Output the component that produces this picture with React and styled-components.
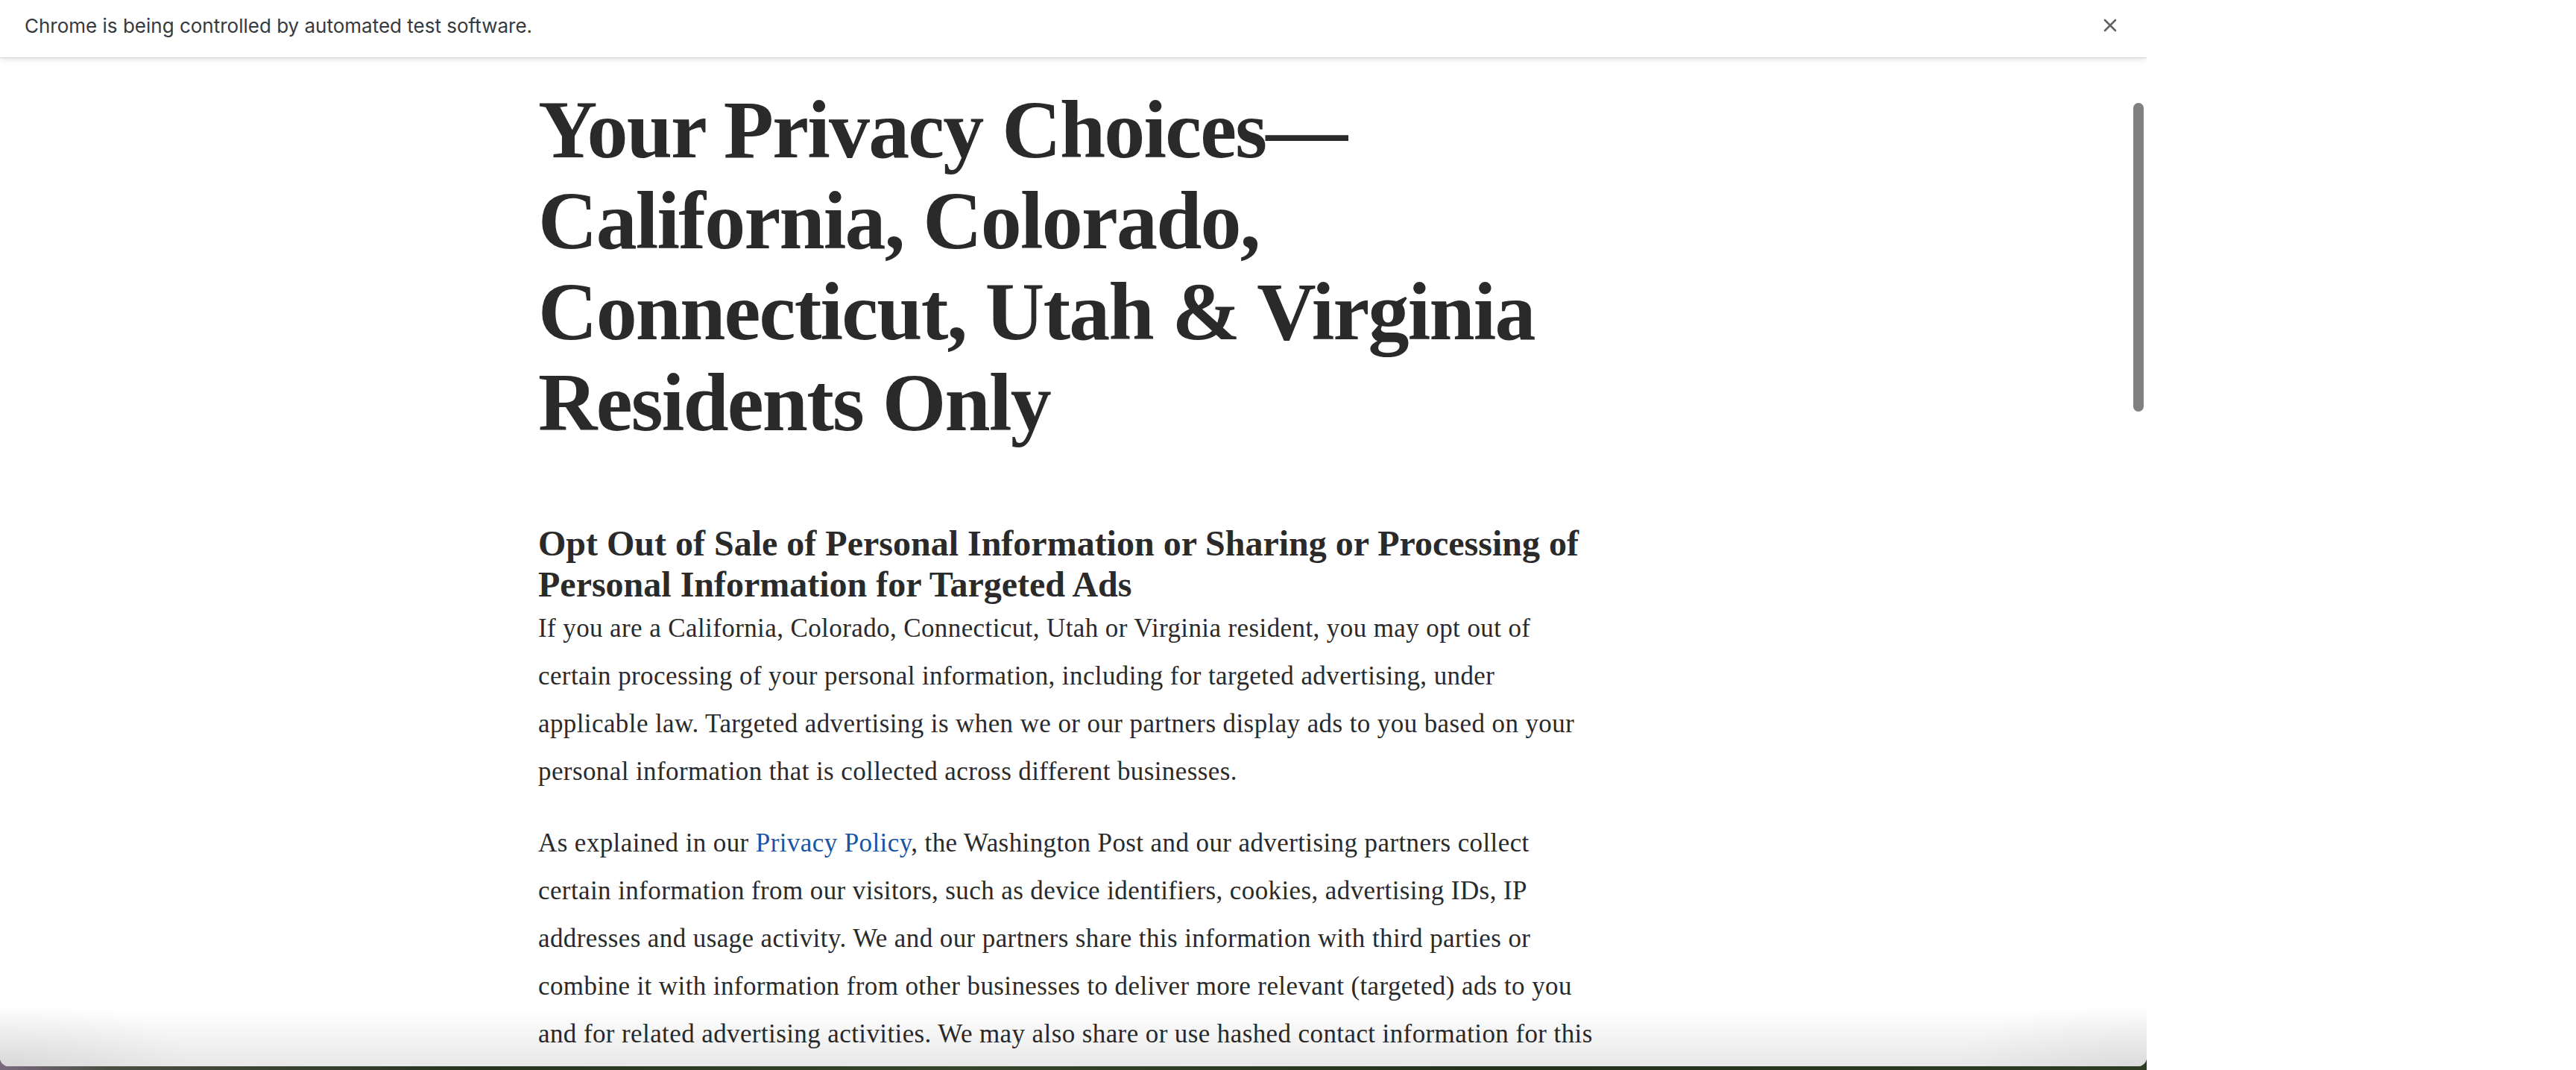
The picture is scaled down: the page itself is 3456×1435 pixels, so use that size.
import React from "react";
import styled, { createGlobalStyle } from "styled-components";

const GlobalStyle = createGlobalStyle`
  html, body {
    margin: 0;
    padding: 0;
    background: #ffffff;
    overflow: hidden;
  }
  #root {
    width: 3456px;
    height: 1435px;
  }
`;

const Screen = styled.div`
  width: 3456px;
  height: 1435px;
  display: flex;
  background: #ffffff;
`;

const WindowColumn = styled.div`
  flex: none;
  width: 2880px;
  height: 100%;
  display: flex;
  flex-direction: column;
  background: linear-gradient(
    90deg,
    #7a6a80 0%,
    #4a4f42 5%,
    #26341f 22%,
    #34452a 45%,
    #22301b 70%,
    #2d3d24 100%
  );
`;

const BrowserWindow = styled.div`
  flex: none;
  height: 1430px;
  background: #ffffff;
  border-radius: 0 0 12px 12px;
  overflow: hidden;
  display: flex;
  flex-direction: column;
  position: relative;
`;

const Infobar = styled.div`
  flex: none;
  height: 77px;
  box-sizing: border-box;
  padding: 0 39px 9px 33px;
  display: flex;
  align-items: center;
  justify-content: space-between;
  background: #ffffff;
  position: relative;
  z-index: 2;
  box-shadow: 0 1px 0 #d4d4d4, 0 2px 8px rgba(0, 0, 0, 0.13);
`;

const InfoText = styled.span`
  font-family: Inter, "Liberation Sans", sans-serif;
  font-size: 26px;
  color: #363a3f;
`;

const CloseButton = styled.button`
  border: 0;
  padding: 0;
  margin: 0;
  background: transparent;
  width: 20px;
  height: 20px;
  display: flex;
  align-items: center;
  justify-content: center;
  color: #5f6368;
`;

const Viewport = styled.div`
  flex: 1;
  position: relative;
  overflow: hidden;
  background: #ffffff;
`;

const Article = styled.article`
  margin-left: 722px;
  width: 1424px;
  padding-top: 36px;
  color: #2a2a2a;
  font-family: "Liberation Serif", "Times New Roman", serif;
`;

const Title = styled.h1`
  margin: 0;
  font-size: 110px;
  line-height: 122px;
  font-weight: 700;
  letter-spacing: -1.8px;
`;

const SectionTitle = styled.h2`
  margin: 100px 0 0;
  font-size: 48px;
  line-height: 55px;
  font-weight: 700;
`;

const Para = styled.p`
  margin: 0 0 32px;
  font-size: 35px;
  line-height: 64px;
  font-weight: 400;
  letter-spacing: 0.4px;
`;

const Link = styled.a`
  color: #1955a5;
  text-decoration: none;
`;

const ScrollThumb = styled.div`
  position: absolute;
  top: 61px;
  right: 4px;
  width: 14px;
  height: 414px;
  border-radius: 7px;
  background: #808080;
`;

const BottomShade = styled.div`
  position: absolute;
  left: 0;
  right: 0;
  bottom: 0;
  height: 78px;
  pointer-events: none;
  background:
    radial-gradient(ellipse 260px 90px at 0% 100%, rgba(0, 0, 0, 0.07), rgba(0, 0, 0, 0) 100%),
    radial-gradient(ellipse 260px 90px at 100% 100%, rgba(0, 0, 0, 0.06), rgba(0, 0, 0, 0) 100%),
    linear-gradient(to bottom, rgba(0, 0, 0, 0), rgba(0, 0, 0, 0.09));
`;

const SideArea = styled.div`
  flex: 1;
  background: #ffffff;
`;

const CloseIcon = () => (
  <svg width="18" height="18" viewBox="0 0 18 18" aria-hidden="true">
    <path
      d="M2 2 L16 16 M16 2 L2 16"
      stroke="currentColor"
      strokeWidth="2.6"
      strokeLinecap="round"
      fill="none"
    />
  </svg>
);

export default function App() {
  return (
    <>
      <GlobalStyle />
      <Screen>
        <WindowColumn>
          <BrowserWindow>
            <Infobar>
              <InfoText>Chrome is being controlled by automated test software.</InfoText>
              <CloseButton aria-label="Close">
                <CloseIcon />
              </CloseButton>
            </Infobar>
            <Viewport>
              <Article>
                <Title>
                  Your Privacy Choices—California, Colorado, Connecticut, Utah &amp; Virginia
                  Residents Only
                </Title>
                <SectionTitle>
                  Opt Out of Sale of Personal Information or Sharing or Processing of Personal
                  Information for Targeted Ads
                </SectionTitle>
                <Para>
                  If you are a California, Colorado, Connecticut, Utah or Virginia resident, you may
                  opt out of certain processing of your personal information, including for targeted
                  advertising, under applicable law. Targeted advertising is when we or our partners
                  display ads to you based on your personal information that is collected across
                  different businesses.
                </Para>
                <Para>
                  As explained in our <Link href="#privacy">Privacy Policy</Link>, the Washington
                  Post and our advertising partners collect certain information from our visitors,
                  such as device identifiers, cookies, advertising IDs, IP addresses and usage
                  activity. We and our partners share this information with third parties or combine
                  it with information from other businesses to deliver more relevant (targeted) ads
                  to you and for related advertising activities. We may also share or use hashed
                  contact information for this purpose.
                </Para>
              </Article>
              <ScrollThumb />
              <BottomShade />
            </Viewport>
          </BrowserWindow>
        </WindowColumn>
        <SideArea />
      </Screen>
    </>
  );
}
